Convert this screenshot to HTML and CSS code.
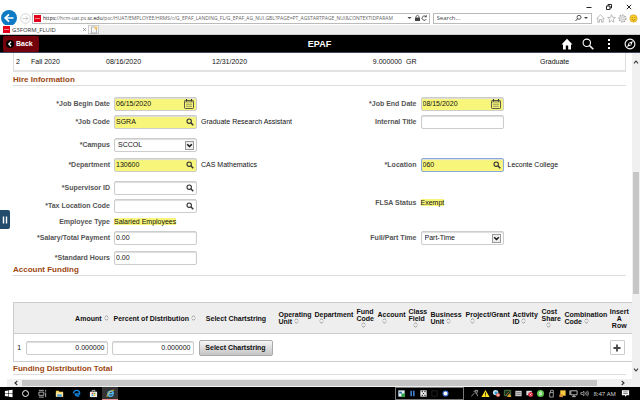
FILE: index.html
```html
<!DOCTYPE html>
<html lang="en">
<head>
    <meta charset="UTF-8">
    <meta name="viewport" content="width=device-width, initial-scale=1.0">
    <title>G3FORM_FLUID</title>
    <link rel="stylesheet" href="styles.css">
</head>
<body>
    <svg class="sprite" aria-hidden="true">
        <symbol id="search" viewBox="0 0 8 8"><circle cx="3.2" cy="3.2" r="2.2" fill="none" stroke="currentColor" stroke-width="1.1"/><path d="M4.8 4.8L7.3 7.3" stroke="currentColor" stroke-width="1.5"/></symbol>
        <symbol id="calendar" viewBox="0 0 10 10"><rect x="0.5" y="1.5" width="9" height="8" rx="0.8" fill="none" stroke="currentColor" stroke-width="0.8"/><path d="M1 2.9h8" stroke="currentColor" stroke-width="0.6"/><path d="M2.5 0v2.5M7.5 0v2.5" stroke="currentColor"/><path d="M2.5 5.2h1M4.5 5.2h1M6.5 5.2h1M2.5 7.3h1M4.5 7.3h1M6.5 7.3h1" stroke="currentColor"/></symbol>
        <symbol id="drop" viewBox="0 0 9 9"><rect x="0.5" y="0.5" width="8" height="8" fill="#eee" stroke="#999"/><path d="M2.2 3.2L4.5 5.6L6.8 3.2" fill="none" stroke="#111" stroke-width="1.4"/></symbol>
        <symbol id="sort" viewBox="0 0 5 6"><path d="M0.8 2.4L2.5 0.7L4.2 2.4M0.8 3.6L2.5 5.3L4.2 3.6" fill="none" stroke="#888" stroke-width="0.8"/></symbol>
        <symbol id="site" viewBox="0 0 7 7"><rect width="7" height="7" fill="#e2001a"/><path d="M1 3.5h5" stroke="#f7a0a0" stroke-width="0.8"/></symbol>
        <symbol id="chevron" viewBox="0 0 6 6"><path d="M1 4.3L3 2L5 4.3" fill="none" stroke="#333" stroke-width="1.1"/></symbol>
    </svg>

    <div class="browser">
        <div class="window-buttons">
            <button aria-label="Minimize"><svg viewBox="0 0 6 6"><path d="M0.5 3.5h5" stroke="#222"/></svg></button>
            <button aria-label="Restore"><svg viewBox="0 0 6 6"><path d="M0.5 2h3.5v3.5h-3.5zM2 2v-1.5h3.5v3.5h-1.5" fill="none" stroke="#222"/></svg></button>
            <button aria-label="Close"><svg viewBox="0 0 6 6"><path d="M0.8 0.8l4.4 4.4M5.2 0.8l-4.4 4.4" stroke="#222"/></svg></button>
        </div>
        <div class="address-row">
            <button class="nav-back" aria-label="Go back"><svg viewBox="0 0 16 16"><circle cx="8" cy="8" r="8" fill="#0f7ac4"/><path d="M12.5 8H4.5M8 4.3L4.2 8L8 11.7" fill="none" stroke="#fff" stroke-width="1.7"/></svg></button>
            <button class="nav-next" aria-label="Go forward"><svg viewBox="0 0 12 12"><circle cx="6" cy="6" r="5.2" fill="none" stroke="#c4c4c4" stroke-width="0.8"/><path d="M3 6h5.5M6.2 3.5L8.7 6L6.2 8.5" fill="none" stroke="#c4c4c4"/></svg></button>
            <div class="address">
                <svg class="site"><use href="#site"/></svg>
                <p class="url"><b>https:</b>//hcm-uat.ps.<b>sc.edu</b>/psc/HUAT/EMPLOYEE/HRMS/c/G_EPAF_LANDING_FL/G_EPAF_AG_NUI.GBL?PAGE=PT_AGSTARTPAGE_NUI&amp;CONTEXTIDPARAM</p>
                <svg class="address-icons" viewBox="0 0 20 8"><path d="M0.5 3h4l-2 2z" fill="#444"/><rect x="8" y="3.5" width="5" height="3.5" fill="#444"/><path d="M9 3.5v-1.2q1.5-1.8 3 0v1.2" fill="none" stroke="#444" stroke-width="0.8"/><path d="M18.8 2.5a2.2 2.2 0 1 0 0.5 2.5" fill="none" stroke="#444" stroke-width="0.9"/><path d="M19.7 0.8v2.5h-2.5z" fill="#444"/></svg>
            </div>
            <div class="search-box">
                <input type="text" placeholder="Search..." aria-label="Search the web">
                <svg viewBox="0 0 13 8"><circle cx="4" cy="3.3" r="2" fill="none" stroke="#444" stroke-width="0.9"/><path d="M2.6 4.7L0.5 7" stroke="#444"/><path d="M9 3h4l-2 2z" fill="#444"/></svg>
            </div>
            <div class="tools">
                <button aria-label="Home page"><svg viewBox="0 0 9 9"><path d="M0.5 4.7L4.5 0.9L8.5 4.7M1.8 4v4.2h1.7V5.5h2v2.7h1.7V4" fill="none" stroke="#a8a8a8" stroke-width="0.8"/></svg></button>
                <button aria-label="Favorites"><svg viewBox="0 0 9 9"><path d="M4.5 0.7L5.6 3.3L8.4 3.5L6.3 5.3L7 8.2L4.5 6.6L2 8.2L2.7 5.3L0.6 3.5L3.4 3.3z" fill="none" stroke="#a8a8a8" stroke-width="0.8"/></svg></button>
                <button aria-label="Tools"><svg viewBox="0 0 9 9"><circle cx="4.5" cy="4.5" r="3.5" fill="none" stroke="#a8a8a8" stroke-width="1.2" stroke-dasharray="1.7 0.9"/><circle cx="4.5" cy="4.5" r="2.7" fill="none" stroke="#a8a8a8" stroke-width="0.6"/><circle cx="4.5" cy="4.5" r="1.2" fill="none" stroke="#a8a8a8" stroke-width="0.7"/></svg></button>
                <button aria-label="Feedback"><svg viewBox="0 0 9 9"><circle cx="4.5" cy="4.5" r="3.7" fill="#fbcf2c" stroke="#c99a1c" stroke-width="0.6"/><path d="M2.8 3.5h1M5.2 3.5h1M2.7 5.4q1.8 1.7 3.6 0" fill="none" stroke="#8a6510" stroke-width="0.7"/></svg></button>
            </div>
        </div>
        <div class="tabs">
            <div class="tab"><svg class="site"><use href="#site"/></svg><span>G3FORM_FLUID</span><button aria-label="Close tab"><svg viewBox="0 0 5 5"><path d="M1 1l3 3M4 1l-3 3" stroke="#777" stroke-width="0.7"/></svg></button></div>
            <button class="new-tab" aria-label="New tab"><svg viewBox="0 0 8 8"><path d="M1.5 1h3.5M1.5 1v6h5V3" fill="none" stroke="#999" stroke-width="0.7"/><path d="M6 0.5v3M4.5 2h3" stroke="#f2b632" stroke-width="1.2"/></svg></button>
        </div>
    </div>

    <header class="page-header">
        <a class="back" href="#"><svg viewBox="0 0 8 8"><circle cx="4" cy="4" r="4" fill="#000"/><path d="M5 1.8L2.8 4L5 6.2" fill="none" stroke="#fff" stroke-width="1.3"/></svg>Back</a>
        <h1>EPAF</h1>
        <nav>
            <button aria-label="Home"><svg viewBox="0 0 12 12"><path d="M6 0.8L11.5 6.5H10V11.5H7.2V7.5H4.8V11.5H2V6.5H0.5z" fill="#fff"/></svg></button>
            <button aria-label="Search"><svg viewBox="0 0 12 12"><circle cx="4.8" cy="4.8" r="3.7" fill="none" stroke="#fff" stroke-width="1.1"/><path d="M7.5 7.5L11.3 11.3" stroke="#fff" stroke-width="1.6"/></svg></button>
            <button aria-label="Actions"><svg viewBox="0 0 12 12"><path d="M5 1h2v2h-2zM5 5h2v2h-2zM5 9h2v2h-2z" fill="#fff"/></svg></button>
            <button aria-label="Navigator"><svg viewBox="0 0 12 12"><circle cx="6" cy="6" r="4.9" fill="none" stroke="#fff" stroke-width="1.1"/><path d="M9 3L7.2 7.2L3 9L4.8 4.8z" fill="#fff"/><circle cx="6" cy="6" r="0.9" fill="#000"/></svg></button>
        </nav>
    </header>

    <div class="view">
        <main>
            <table class="terms">
                <colgroup><col class="t1"><col class="t2"><col class="t3"><col class="t4"><col class="t5"><col class="t6"><col></colgroup>
                <tr><td>2</td><td>Fall 2020</td><td>08/16/2020</td><td>12/31/2020</td><td class="num">9.000000</td><td>GR</td><td>Graduate</td></tr>
            </table>

            <h2>Hire Information</h2>
            <form class="hire">
                <div class="side left">
                    <label for="begin">*Job Begin Date</label>
                    <div class="field required"><input id="begin" type="text" value="06/15/2020"><button type="button" aria-label="Choose begin date"><svg class="cal"><use href="#calendar"/></svg></button></div>

                    <label for="jobcode">*Job Code</label>
                    <div class="field required"><input id="jobcode" type="text" value="SGRA"><button type="button" aria-label="Look up job code"><svg><use href="#search"/></svg></button></div>
                    <span>Graduate Research Assistant</span>

                    <label for="campus">*Campus</label>
                    <div class="field"><select id="campus"><option>SCCOL</option></select><svg class="arrow"><use href="#drop"/></svg></div>

                    <label for="dept">*Department</label>
                    <div class="field required"><input id="dept" type="text" value="130600"><button type="button" aria-label="Look up department"><svg><use href="#search"/></svg></button></div>
                    <span>CAS Mathematics</span>

                    <label for="supervisor">*Supervisor ID</label>
                    <div class="field"><input id="supervisor" type="text"><button type="button" aria-label="Look up supervisor"><svg><use href="#search"/></svg></button></div>

                    <label for="tax">*Tax Location Code</label>
                    <div class="field"><input id="tax" type="text"><button type="button" aria-label="Look up tax location"><svg><use href="#search"/></svg></button></div>

                    <label for="emptype">Employee Type</label>
                    <output id="emptype"><mark>Salaried Employees</mark></output>

                    <label for="salary">*Salary/Total Payment</label>
                    <div class="field"><input id="salary" type="text" value="0.00"></div>

                    <label for="hours">*Standard Hours</label>
                    <div class="field"><input id="hours" type="text" value="0.00"></div>
                </div>
                <div class="side right">
                    <label for="end">*Job End Date</label>
                    <div class="field required"><input id="end" type="text" value="08/15/2020"><button type="button" aria-label="Choose end date"><svg class="cal"><use href="#calendar"/></svg></button></div>

                    <label for="title">Internal Title</label>
                    <div class="field"><input id="title" type="text"></div>

                    <label for="location">*Location</label>
                    <div class="field required active"><input id="location" type="text" value="060"><button type="button" aria-label="Look up location"><svg><use href="#search"/></svg></button></div>
                    <span>Leconte College</span>

                    <label for="flsa">FLSA Status</label>
                    <output id="flsa"><mark>Exempt</mark></output>

                    <label for="fulltime">Full/Part Time</label>
                    <div class="field"><select id="fulltime"><option>Part-Time</option></select><svg class="arrow"><use href="#drop"/></svg></div>
                </div>
            </form>

            <h2>Account Funding</h2>
            <table class="funding">
                <colgroup><col class="c1"><col class="c2"><col class="c3"><col class="c4"><col class="c5"><col class="c6"><col class="c7"><col class="c8"><col class="c9"><col class="c10"><col class="c11"><col class="c12"><col class="c13"><col class="c14"><col></colgroup>
                <thead>
                    <tr>
                        <th></th>
                        <th class="num">Amount <svg><use href="#sort"/></svg></th>
                        <th class="num">Percent of Distribution <svg><use href="#sort"/></svg></th>
                        <th class="mid">Select Chartstring</th>
                        <th>Operating<br>Unit <svg><use href="#sort"/></svg></th>
                        <th>Department<br><svg class="own-line"><use href="#sort"/></svg></th>
                        <th>Fund<br>Code<br><svg class="own-line"><use href="#sort"/></svg></th>
                        <th>Account<br><svg class="own-line"><use href="#sort"/></svg></th>
                        <th>Class<br>Field<br><svg class="own-line"><use href="#sort"/></svg></th>
                        <th>Business<br>Unit <svg><use href="#sort"/></svg></th>
                        <th>Project/Grant<br><svg class="own-line"><use href="#sort"/></svg></th>
                        <th>Activity<br>ID <svg><use href="#sort"/></svg></th>
                        <th>Cost<br>Share<br><svg class="own-line"><use href="#sort"/></svg></th>
                        <th>Combination<br>Code <svg><use href="#sort"/></svg></th>
                        <th class="mid">Insert<br>A<br>Row</th>
                    </tr>
                </thead>
                <tbody>
                    <tr>
                        <td class="mid">1</td>
                        <td><div class="field"><input type="text" value="0.000000" aria-label="Amount"></div></td>
                        <td><div class="field"><input type="text" value="0.000000" aria-label="Percent of Distribution"></div></td>
                        <td class="mid"><button class="chartstring">Select Chartstring</button></td>
                        <td colspan="10"></td>
                        <td class="mid"><button class="add" aria-label="Insert a row"><svg viewBox="0 0 8 8"><path d="M4 0.5v7M0.5 4h7" stroke="#444" stroke-width="1.8"/></svg></button></td>
                    </tr>
                </tbody>
            </table>
            <h2>Funding Distribution Total</h2>
            <button class="drawer" aria-label="Open side panel"><svg viewBox="0 0 6 8"><path d="M1.5 0.5v7M4.5 0.5v7" stroke="#fff" stroke-width="1.4"/></svg></button>
        </main>
        <div class="vscroll">
            <svg><use href="#chevron"/></svg>
            <i class="before"></i><i class="thumb"></i><i class="after"></i>
            <svg class="down"><use href="#chevron"/></svg>
        </div>
    </div>
    <div class="hscroll">
        <svg class="prev"><use href="#chevron"/></svg>
        <i class="thumb"></i><i class="after"></i>
        <svg class="next"><use href="#chevron"/></svg>
    </div>

    <footer class="taskbar">
        <div class="apps">
            <button aria-label="Start"><svg viewBox="0 0 10 10"><path d="M1 2.2L4.6 1.6V4.7H1zM5.2 1.5L9.5 0.9V4.7H5.2zM1 5.3H4.6V8.4L1 7.8zM5.2 5.3H9.5V9.1L5.2 8.5z" fill="#fff"/></svg></button>
            <button aria-label="Cortana"><svg viewBox="0 0 10 10"><circle cx="5" cy="5" r="3.3" fill="none" stroke="#fff" stroke-width="1.1"/></svg></button>
            <button aria-label="Task View"><svg viewBox="0 0 10 10"><path d="M1 3.5h5.5v3.5h-5.5zM1 1.5h5.5M1 9h5.5M8.5 1v2M8.5 4v5" fill="none" stroke="#ccc" stroke-width="0.9"/></svg></button>
            <button aria-label="File Explorer"><svg viewBox="0 0 10 10"><path d="M1 2h3l1 1h4v5.5H1z" fill="#f7cf5d"/><path d="M1 4h8v4.5H1z" fill="#fbe39b"/><path d="M2.5 6h5v2.5H2.5z" fill="#3e9be0"/></svg></button>
            <button aria-label="Edge"><svg viewBox="0 0 10 10"><path d="M1.5 4.8C2 2.5 3.5 1.5 5.2 1.5C7.8 1.5 8.6 3.5 8.4 5.5H3.7C3.9 8 6.5 8.1 8 7.3" fill="none" stroke="#1585e0" stroke-width="1.6"/></svg></button>
            <button aria-label="Store"><svg viewBox="0 0 10 10"><path d="M1 3h8v6H1z" fill="#eee"/><path d="M3.5 3V1.5h3V3" fill="none" stroke="#eee" stroke-width="0.8"/><path d="M3 4.2h1.8V5.7H3z" fill="#e0462b"/><path d="M5.2 4.2H7V5.7H5.2z" fill="#72ad20"/><path d="M3 6.2h1.8v1.5H3z" fill="#199bd8"/><path d="M5.2 6.2H7v1.5H5.2z" fill="#efb21d"/></svg></button>
            <button class="open" aria-label="Internet Explorer"><svg viewBox="0 0 10 10"><path d="M2.5 5.2h5.6C8 1.5 2.5 1.5 2.3 5.2C2.2 8.7 6.7 9 7.8 6.7" fill="none" stroke="#4fb8f0" stroke-width="1.6"/><path d="M1.3 9C0 7 5.5 0.5 9 1.5" fill="none" stroke="#f5c83c" stroke-width="0.9"/></svg></button>
        </div>
        <div class="capture">
            <svg viewBox="0 0 10 10"><path d="M1.5 1.5h7v7h-7z" fill="#dff0f7"/><path d="M2.5 3h3v2h-3z" fill="#2d6ea6"/><path d="M5 5h4v4H5z" fill="#35a046"/></svg>
            <svg viewBox="0 0 10 10"><path d="M3.5 2v6M6.5 2v6" stroke="#4d91e6" stroke-width="1.6"/></svg>
            <svg viewBox="0 0 10 10"><path d="M1.5 1.5h7v7h-7z" fill="#eee"/><path d="M3 3h1.3M6 3h1.3M4.4 5h1.3M3 7h1.3M6 7h1.3" stroke="#222" stroke-width="1.3"/></svg>
            <svg viewBox="0 0 10 10"><path d="M2 2h6v6H2z" fill="none" stroke="#222"/></svg>
            <svg viewBox="0 0 10 10"><circle cx="5" cy="5" r="2.8" fill="#fff" stroke="#2e68cf" stroke-width="1.2"/></svg>
        </div>
        <div class="tray">
            <svg viewBox="0 0 10 10"><path d="M1.5 8L5 4.5M4 2.5h2.5v2.5M7 4l1.5 4M5.5 1.5h3v2.5" fill="none" stroke="#bbb" stroke-width="0.9"/></svg>
            <svg viewBox="0 0 10 10"><path d="M5 1L9.5 9h-9z" fill="#ffe21d"/><path d="M5 3.7v2.8M5 7.2v1" stroke="#222"/></svg>
            <svg viewBox="0 0 10 10"><circle cx="4" cy="4" r="3" fill="#c3e6f6"/><path d="M3 3h3v3H3z" fill="#2c9ed2"/><circle cx="6.7" cy="6.7" r="2.3" fill="#e4635c"/><path d="M5.5 6.7h2.4" stroke="#fff"/></svg>
            <svg viewBox="0 0 10 10"><path d="M1.5 1.5h7v6h-7z" fill="#17341a" stroke="#55884f" stroke-width="0.9"/><path d="M3 7L7 3" stroke="#a8552f"/><path d="M7 5l2.5 4h-5z" fill="#e1a52b"/></svg>
            <svg viewBox="0 0 10 10"><path d="M1.5 2h7v6h-7z" fill="#ccc"/><path d="M2.5 4h5M2.5 6h5" stroke="#666" stroke-width="0.8"/></svg>
            <svg viewBox="0 0 10 10"><path d="M1.5 2h6v5h-6z" fill="#ddd"/><circle cx="6.3" cy="6" r="2.8" fill="#cf2335"/><path d="M5.2 5l2.2 2.2M7.4 5L5.2 7.2" stroke="#fff" stroke-width="0.8"/></svg>
            <svg viewBox="0 0 10 10"><circle cx="5" cy="5" r="3.9" fill="#5cc84a"/><path d="M6.7 3.8Q4 2.2 3.6 4.5Q5 5 6.3 5.3Q6.2 7.5 3.4 6.3" fill="none" stroke="#fff" stroke-width="0.9"/></svg>
            <svg viewBox="0 0 10 10"><path d="M3 4h4v5H3zM4 4V1.5h3V4" fill="none" stroke="#bbb" stroke-width="0.9"/></svg>
            <svg viewBox="0 0 10 10"><path d="M2.5 1.5h6v6h-6z" fill="#f7c842"/><path d="M1.5 6h4v3h-4z" fill="#d98f34"/></svg>
            <svg viewBox="0 0 10 10"><path d="M2 2h7v4.5H2zM5.5 6.5v2M3.5 8.5h4M1 1.5v5" fill="none" stroke="#ddd" stroke-width="0.9"/></svg>
            <svg viewBox="0 0 10 10"><path d="M1 4h1.5L4.3 2.5v5L2.5 6H1z" fill="none" stroke="#ddd" stroke-width="0.7"/><path d="M5.7 3.7q1 1.3 0 2.6M7 2.8q1.8 2.2 0 4.4M8.4 2q2.2 3 0 6" fill="none" stroke="#ddd" stroke-width="0.7"/></svg>
        </div>
        <time>8:47 AM</time>
        <button class="notes" aria-label="Notifications"><svg viewBox="0 0 10 10"><path d="M1 1.5h8v5.5H6L4.5 9V7H1z" fill="#fff"/><path d="M2.5 3.2h5M2.5 5h5" stroke="#333" stroke-width="0.7"/></svg></button>
    </footer>
</body>
</html>
```
FILE: styles.css
```css
*{
    margin: 0;
    padding: 0;
    box-sizing: border-box;
}
body{
    display: flex;
    flex-direction: column;
    min-height: 100vh;
    background-color: white;
    color: #111;
    font-family: "Liberation Sans", Arial, Helvetica, sans-serif;
    font-size: 7px;
    line-height: 8px;
}
button{
    display: flex;
    align-items: center;
    justify-content: center;
    border: none;
    background: none;
    font: inherit;
    color: inherit;
    cursor: pointer;
}
input, select{
    min-width: 0;
    flex: 1;
    border: none;
    outline: none;
    background: none;
    font: inherit;
    color: inherit;
    appearance: none;
}
svg{
    display: block;
    flex: none;
}
.sprite{
    position: absolute;
    width: 0;
    height: 0;
}

/* browser window */
.browser{
    font-family: "Open Sans", "Noto Sans", sans-serif;
    font-size: 6px;
    color: #555;
}
.window-buttons{
    display: flex;
    justify-content: flex-end;
    gap: 14px;
    height: 11px;
    padding: 3px 8px 0 0;
}
.window-buttons svg{
    width: 6px;
    height: 6px;
}
.address-row{
    display: flex;
    align-items: center;
    height: 14px;
    padding-right: 2px;
}
.nav-back{
    margin: 0 3px 0 1px;
}
.nav-back svg{
    width: 16px;
    height: 16px;
}
.nav-next svg{
    width: 11px;
    height: 11px;
}
.address, .search-box{
    display: flex;
    align-items: center;
    height: 11px;
    border: 1px solid #bbb;
    background-color: white;
}
.address{
    flex: 1;
    min-width: 0;
    gap: 2px;
    margin: 0 3px 0 1px;
    padding: 0 2px 0 1px;
}
.site{
    width: 7px;
    height: 7px;
}
.url{
    flex: 1;
    min-width: 0;
    overflow: hidden;
    white-space: nowrap;
    color: #666;
    font-size: 5px;
}
.url b{
    font-weight: 400;
    color: #111;
}
.address-icons{
    width: 20px;
    height: 8px;
}
.search-box{
    width: 25%;
    padding: 0 3px;
}
.search-box input::placeholder{
    color: #444;
}
.search-box svg{
    width: 13px;
    height: 8px;
}
.tools{
    display: flex;
    gap: 2px;
    padding-left: 4px;
}
.tools svg{
    width: 9px;
    height: 9px;
}
.tabs{
    display: flex;
    height: 10px;
    background-color: #eee;
    border-bottom: 1px solid #ccc;
}
.tab{
    display: flex;
    align-items: center;
    gap: 2px;
    width: 88px;
    padding: 0 1px 0 3px;
    background-color: white;
    color: #333;
}
.tab span{
    flex: 1;
}
.tab button svg{
    width: 5px;
    height: 5px;
}
.new-tab{
    width: 11px;
    border: 1px solid #ccc;
    background-color: #f7f7f7;
}
.new-tab svg{
    width: 8px;
    height: 8px;
}

/* page header */
.page-header{
    display: grid;
    grid-template-columns: 1fr auto 1fr;
    align-items: center;
    height: 18px;
    padding: 0 4px 0 3px;
    background-color: black;
    border-bottom: 1px solid #3b4a63;
    color: white;
}
.page-header h1{
    font-size: 9px;
    line-height: 10px;
}
.back{
    display: flex;
    align-items: center;
    justify-self: start;
    gap: 2px;
    height: 16px;
    padding: 0 6px 0 3px;
    border-radius: 2px;
    background-color: #73000a;
    color: white;
    font-weight: bold;
    text-decoration: none;
}
.back svg{
    width: 8px;
    height: 8px;
}
.page-header nav{
    display: flex;
    justify-self: end;
    gap: 9px;
}
.page-header nav svg{
    width: 12px;
    height: 12px;
}

/* content */
.view{
    display: flex;
    flex: 1;
}
main{
    position: relative;
    flex: 1;
    min-width: 0;
    padding-left: 13px;
}
.terms{
    width: calc(100% - 6px);
    height: 19px;
    table-layout: fixed;
    border-collapse: separate;
    border-spacing: 0;
    border: 1px solid #ddd;
    border-top: none;
    border-bottom: 2px solid #e2e2e2;
}
.t1 { width: 15px; }
.t2 { width: 75px; }
.t3 { width: 106px; }
.t4 { width: 106px; }
.t5 { width: 88px; }
.t6 { width: 134px; }
.terms td{
    padding-left: 2px;
}
h2{
    margin-right: 6px;
    border-bottom: 1px solid #ddd;
    color: #9c4710;
    font-size: 8px;
    line-height: 10px;
}
.terms + h2{
    margin-top: 3px;
}
.hire{
    display: grid;
    grid-template-columns: 1fr 1fr;
    margin-right: 6px;
    padding-top: 11px;
}
.side{
    display: grid;
    grid-template-columns: 97px 83px 1fr;
    column-gap: 4px;
    align-items: start;
}
.left{
    grid-template-rows: 18px 23px 20px 23px 18px 16px 16px 20px 14px;
}
.right{
    grid-template-rows: 18px 43px 38px 35px 14px;
}
.side label, .side output, .side span{
    line-height: 14px;
}
.side label{
    grid-column: 1;
    color: #555;
    font-weight: bold;
    text-align: right;
    white-space: nowrap;
}
.side output{
    grid-column: 2;
    white-space: nowrap;
}
mark{
    background-color: #f8f67a;
    color: inherit;
}
.field{
    display: flex;
    align-items: center;
    height: 14px;
    padding: 0 2px 0 1px;
    border: 1px solid #ccc;
    border-radius: 2px;
    background-color: white;
    box-shadow: inset 0 1px 1px #ddd;
}
.required{
    background-color: #f8f67a;
}
.active{
    border-color: #8ba9dc;
}
.field svg{
    width: 8px;
    height: 8px;
    color: #333;
}
.field .cal{
    width: 10px;
    height: 10px;
}
.field .arrow{
    width: 9px;
    height: 9px;
    margin-left: -9px;
    pointer-events: none;
}
.field select{
    padding-left: 2px;
}

/* account funding grid */
.funding{
    width: 100%;
    margin: 26px 0 2px;
    table-layout: fixed;
    border-collapse: collapse;
    border: 1px solid #ccc;
    border-right: none;
}
.c1 { width: 11px; }
.c2 { width: 86px; }
.c3 { width: 86px; }
.c4 { width: 79px; }
.c5 { width: 36px; }
.c6 { width: 42px; }
.c7 { width: 21px; }
.c8 { width: 31px; }
.c9 { width: 22px; }
.c10 { width: 35px; }
.c11 { width: 47px; }
.c12 { width: 29px; }
.c13 { width: 23px; }
.c14 { width: 45px; }
.funding thead{
    height: 31px;
    background-color: #eee;
    border-bottom: 1px solid #ccc;
}
.funding tbody{
    height: 28px;
}
.funding th{
    padding-left: 3px;
    font-size: 7px;
    line-height: 7px;
    text-align: left;
    white-space: nowrap;
}
.funding th svg{
    display: inline-block;
    width: 5px;
    height: 6px;
    vertical-align: top;
}
.funding th .own-line{
    margin-left: 4px;
}
.funding td .field{
    margin: 0 3px 0 1px;
}
.funding .field input{
    text-align: right;
}
.funding .num, .num{
    padding-right: 2px;
    text-align: right;
}
.funding .mid{
    padding: 0;
    text-align: center;
}
.chartstring{
    width: 74px;
    height: 16px;
    margin: 0 auto 0 2px;
    border: 1px solid #aaa;
    border-radius: 2px;
    background-image: linear-gradient(#f6f6f6, #c4c4c4);
    font-weight: bold;
}
.add{
    width: 15px;
    height: 15px;
    margin: 0 auto 0 3px;
    border: 1px solid #ccc;
    border-radius: 1px;
    background-color: white;
}
.add svg{
    width: 8px;
    height: 8px;
}
/* sits on top of the page edge */
.drawer{
    position: absolute;
    left: 0;
    top: 157px;
    width: 10px;
    height: 19px;
    border-radius: 0 2px 2px 0;
    background-color: #234b6b;
}
.drawer svg{
    width: 6px;
    height: 8px;
}

/* scrollbars */
.vscroll{
    display: flex;
    flex-direction: column;
    align-items: center;
    width: 8px;
    padding: 6px 0;
    background-color: #f0f0f0;
}
.vscroll svg, .hscroll svg{
    width: 6px;
    height: 6px;
}
.vscroll .thumb{
    flex: 122;
    width: 6px;
}
.vscroll .before{
    flex: 107;
}
.vscroll .after{
    flex: 73;
}
.thumb{
    background-color: #c6c6c6;
}
.down{
    transform: rotate(180deg);
}
.hscroll{
    display: flex;
    align-items: center;
    height: 8px;
    margin-left: 7px;
    padding: 0 14px 0 6px;
    background-color: #f0f0f0;
}
.hscroll .thumb{
    flex: 575;
    height: 6px;
    margin-left: 3px;
}
.hscroll .after{
    flex: 23;
}
.prev{
    transform: rotate(-90deg);
}
.next{
    transform: rotate(90deg);
}

/* taskbar */
.taskbar{
    display: flex;
    align-items: center;
    height: 13px;
    background-color: black;
    color: #ddd;
    font-family: "Open Sans", "Noto Sans", sans-serif;
    font-size: 6px;
}
.taskbar svg{
    width: 9px;
    height: 9px;
}
.apps{
    display: flex;
    flex: 1;
}
.apps button{
    width: 16px;
    height: 13px;
    margin-right: 1px;
}
.apps .open{
    background-color: #333;
    border-bottom: 1px solid #e88f8f;
}
.capture{
    display: flex;
    align-items: center;
    gap: 2px;
    width: 69px;
    height: 13px;
    padding-left: 1px;
    border: 1px solid #777;
}
.tray{
    display: flex;
    gap: 2px;
    padding: 0 4px 0 6px;
}
.taskbar time{
    white-space: nowrap;
}
.notes{
    margin: 0 10px 0 5px;
}
```
